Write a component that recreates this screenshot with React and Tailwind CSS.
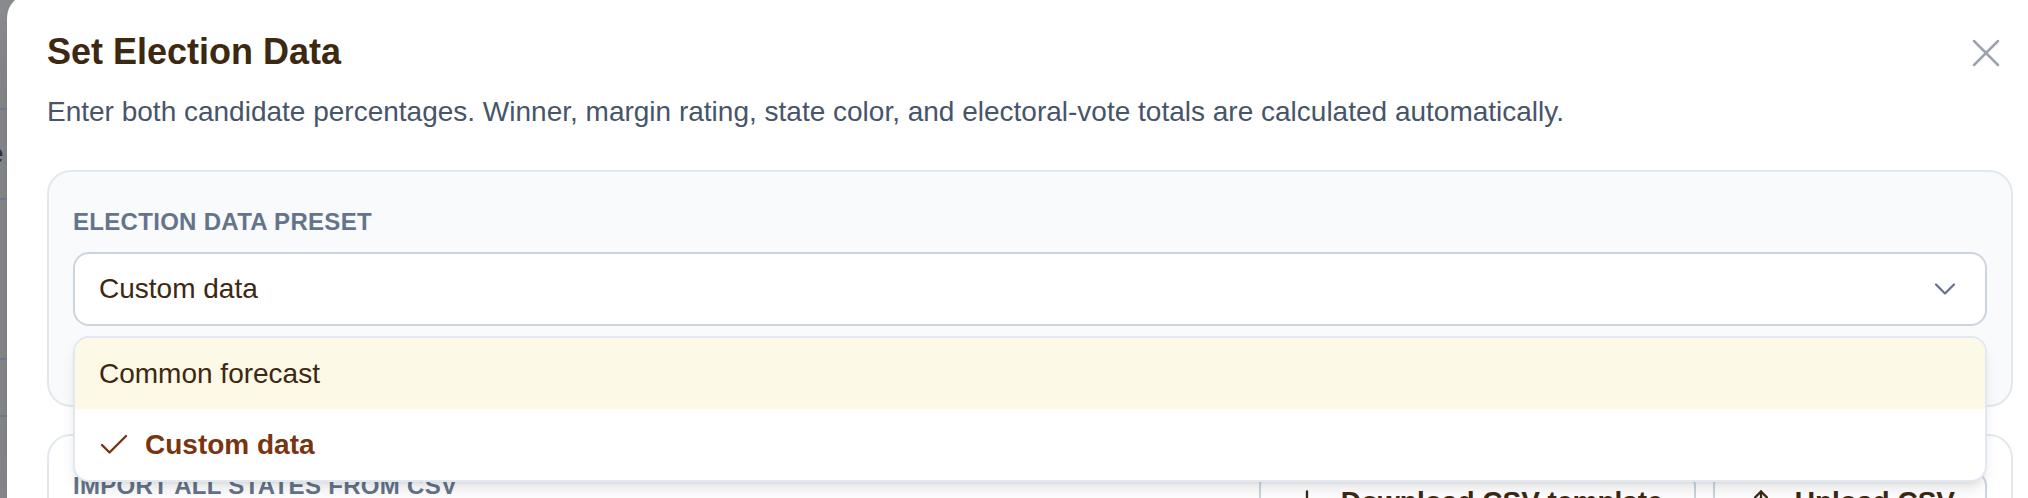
import { ChevronDown, Check, X, Download, Upload } from 'lucide-react';

// ── Dimmed page behind the dialog (only a sliver shows) ───────────────────────
function BackdropStrip() {
  return (
    <div className="w-[7px] shrink-0 overflow-hidden flex flex-col">
      <div className="h-[110px] shrink-0 border-b-2 border-[#74819a]" />
      <div className="h-[90px] shrink-0 border-b-2 border-[#74819a] flex items-center">
        <span className="-ml-[12px] text-[28px] leading-none text-[#2f3440]">e</span>
      </div>
      <div className="h-[160px] shrink-0 border-b-2 border-[#74819a]" />
      <div className="h-[57px] shrink-0 border-b-2 border-[#74819a]" />
    </div>
  );
}

// ── Preset select with open listbox ───────────────────────────────────────────
function PresetSelect() {
  return (
    <div className="relative mt-[14px]">
      <button className="h-[74px] w-full rounded-[16px] border-2 border-[#cbd5e1] bg-white pl-[24px] pr-[22px] flex items-center justify-between text-[28px] leading-[40px] text-[#3d2812]">
        <span>Custom data</span>
        <ChevronDown size={36} strokeWidth={1.5} className="text-[#64748b]" />
      </button>

      <div className="absolute left-0 right-0 top-[84px] z-10 rounded-[16px] border-2 border-[#e2e8f0] bg-white shadow-lg overflow-hidden">
        <div className="h-[71px] bg-[#fdf9e7] px-[24px] flex items-center text-[28px] leading-[40px] text-[#3d2812]">
          Common forecast
        </div>
        <div className="h-[71px] px-[24px] flex items-center gap-[13px] text-[28px] leading-[40px] font-bold text-[#78350f]">
          <Check size={36} strokeWidth={1.6} className="-ml-[3px]" />
          <span>Custom data</span>
        </div>
      </div>
    </div>
  );
}

export default function App() {
  return (
    <div className="w-[2028px] h-[498px] overflow-hidden bg-[#8b8c90] flex font-['Liberation_Sans',Arial,sans-serif]">
      <BackdropStrip />

      <div className="relative shrink-0 w-[2046px] -mt-[6px] bg-white rounded-t-[24px] px-[40px] pt-[30px] shadow-2xl">
        <button className="absolute right-[43px] top-[35px] text-[#9ca3af]">
          <X size={48} strokeWidth={1.25} />
        </button>

        <h2 className="text-[36px] leading-[56px] font-bold text-[#3d2812]">Set Election Data</h2>
        <p className="mt-[12px] text-[28px] leading-[40px] text-[#475569]">
          Enter both candidate percentages. Winner, margin rating, state color, and electoral-vote totals are calculated automatically.
        </p>

        <section className="mt-[38px] rounded-[24px] border-2 border-[#e2e8f0] bg-[#f8fafc] px-[24px] pt-[34px] pb-[79px]">
          <label className="block text-[24px] leading-[32px] font-bold uppercase tracking-[0.3px] text-[#64748b]">
            Election data preset
          </label>
          <PresetSelect />
        </section>

        <section className="mt-[27px] rounded-[24px] border-2 border-[#e2e8f0] bg-white px-[24px] pt-[34px] pb-[24px] flex items-start justify-between">
          <div className="text-[24px] leading-[32px] font-bold uppercase tracking-[0.3px] text-[#64748b]">
            Import all states from CSV
          </div>
          <div className="flex gap-[17px]">
            <button className="h-[64px] rounded-[16px] border-2 border-[#cbd5e1] bg-white pl-[32px] pr-[31px] flex items-center gap-[20px] text-[28px] leading-[40px] font-bold text-[#3d2812]">
              <Download size={28} strokeWidth={2} />
              <span>Download CSV template</span>
            </button>
            <button className="h-[64px] rounded-[16px] border-2 border-[#cbd5e1] bg-white pl-[32px] pr-[30px] flex items-center gap-[20px] text-[28px] leading-[40px] font-bold text-[#3d2812]">
              <Upload size={28} strokeWidth={2} />
              <span>Upload CSV</span>
            </button>
          </div>
        </section>
      </div>
    </div>
  );
}
